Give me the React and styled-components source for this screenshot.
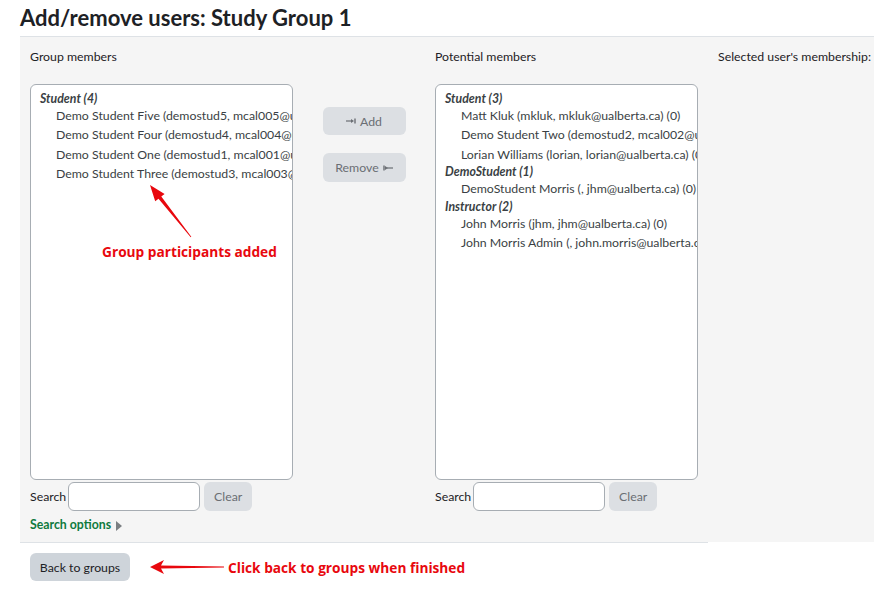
import React from "react"
import styled, { createGlobalStyle } from "styled-components"

const GlobalStyle = createGlobalStyle`
  body {
    margin: 0;
    background: #fff;
    font-family: Lato, "Liberation Sans", sans-serif;
    color: #1d2125;
  }
`

const Page = styled.div`
  padding-left: 20px;
  overflow: hidden;
`

const Title = styled.h2`
  margin: 6px 0 6px 0;
  font-size: 22px;
  line-height: 24px;
  font-weight: 700;
  color: #1d2125;
`

const Panel = styled.div`
  background: #f5f5f5;
  border-top: 1px solid #dee2e6;
  padding: 10px 0 0 10px;
`

const Columns = styled.div`
  display: grid;
  grid-template-columns: 263px 142px 263px 1fr;
`

const Column = styled.div`
  display: flex;
  flex-direction: column;
  padding-left: ${(p) => (p.$aside ? "20px" : "0")};
`

const Label = styled.div`
  font-size: 12.3px;
  line-height: 20px;
  white-space: nowrap;
`

const ListBox = styled.div`
  position: relative;
  box-sizing: border-box;
  margin-top: 17px;
  height: 396px;
  background: #fff;
  border: 1px solid #a7adb3;
  border-radius: 6px;
  padding: 6px 0 0 9px;
  overflow: hidden;
  font-size: 12.3px;
`

const GroupLabel = styled.div`
  font-weight: 700;
  font-style: italic;
  line-height: 15px;
  color: #3a3f44;
  white-space: nowrap;
`

const Option = styled.div`
  padding-left: 16px;
  line-height: 19.4px;
  color: #3a3f44;
  white-space: nowrap;
`

const Buttons = styled.div`
  display: flex;
  flex-direction: column;
  align-items: center;
  gap: 18px;
  padding-top: 60px;
`

const Button = styled.button`
  display: inline-flex;
  align-items: center;
  justify-content: center;
  gap: 4px;
  height: ${(p) => p.$h || 29}px;
  width: ${(p) => (p.$w ? p.$w + "px" : "auto")};
  padding: 0;
  border: none;
  border-radius: 6px;
  font-family: inherit;
  font-size: 12.3px;
  white-space: nowrap;
  background: ${(p) => (p.$disabled ? "#dcdfe3" : "#ced4da")};
  color: ${(p) => (p.$disabled ? "#6a6e73" : "#1d2125")};
  cursor: default;
`

const SearchRow = styled.div`
  display: flex;
  align-items: center;
  gap: 4px;
  margin-top: 2px;
  font-size: 12.3px;
`

const SearchLabel = styled.span`
  margin-right: -2px;
`

const SearchInput = styled.input`
  box-sizing: border-box;
  width: 132px;
  height: 29px;
  border: 1px solid #a7adb3;
  border-radius: 6px;
  background: #fff;
  margin: 0;
`

const SearchOptions = styled.div`
  display: flex;
  align-items: center;
  gap: 5px;
  margin-top: 4px;
  padding-bottom: 7px;
  font-size: 12.3px;
  line-height: 20px;
  font-weight: 700;
  color: #0f7a3e;
`

const Caret = styled.span`
  width: 0;
  height: 0;
  border-top: 5px solid transparent;
  border-bottom: 5px solid transparent;
  border-left: 6px solid #7b7f83;
  margin-top: 2px;
`

const Divider = styled.div`
  width: 688px;
  border-top: 1px solid #dee2e6;
`

const Footer = styled.div`
  display: flex;
  align-items: center;
  padding: 10px 0 0 10px;
`

const Note = styled.span`
  font-family: "Open Sans", "Noto Sans", sans-serif;
  font-weight: 700;
  font-size: 13.7px;
  color: #e8080e;
  white-space: nowrap;
`

const FooterNote = styled.div`
  display: flex;
  align-items: center;
  gap: 4px;
  margin-left: 20px;
`

const Callout = styled.div`
  position: absolute;
  left: 71px;
  top: 157px;
`

const CalloutArrow = styled.svg`
  position: absolute;
  left: 115px;
  top: 97px;
`

const AddIcon = () => (
  <svg width="10" height="6" viewBox="0 0 10 6">
    <path d="M0 3h6" stroke="#6a6e73" strokeWidth="1.2" />
    <path d="M5 1l3 2-3 2z" fill="#6a6e73" />
    <path d="M9 0.5v5" stroke="#6a6e73" strokeWidth="1.4" />
  </svg>
)

const RemoveIcon = () => (
  <svg width="10" height="6" viewBox="0 0 10 6">
    <path d="M1 0.5v5" stroke="#6a6e73" strokeWidth="1.4" />
    <path d="M2 1l3 2-3 2z" fill="#6a6e73" />
    <path d="M4 3h6" stroke="#6a6e73" strokeWidth="1.2" />
  </svg>
)

const members = [
  "Demo Student Five (demostud5, mcal005@ualberta.ca) (0)",
  "Demo Student Four (demostud4, mcal004@ualberta.ca) (0)",
  "Demo Student One (demostud1, mcal001@ualberta.ca) (0)",
  "Demo Student Three (demostud3, mcal003@ualberta.ca) (0)",
]

const potential = [
  {
    label: "Student (3)",
    users: [
      "Matt Kluk (mkluk, mkluk@ualberta.ca) (0)",
      "Demo Student Two (demostud2, mcal002@ualberta.ca) (0)",
      "Lorian Williams (lorian, lorian@ualberta.ca) (0)",
    ],
  },
  { label: "DemoStudent (1)", users: ["DemoStudent Morris (, jhm@ualberta.ca) (0)"] },
  {
    label: "Instructor (2)",
    users: [
      "John Morris (jhm, jhm@ualberta.ca) (0)",
      "John Morris Admin (, john.morris@ualberta.ca) (0)",
    ],
  },
]

const Search = () => (
  <SearchRow>
    <SearchLabel>Search</SearchLabel>
    <SearchInput />
    <Button $disabled $w={48}>Clear</Button>
  </SearchRow>
)

export default function App() {
  return (
    <Page>
      <GlobalStyle />
      <Title>Add/remove users: Study Group 1</Title>
      <Panel>
        <Columns>
          <Column>
            <Label>Group members</Label>
            <ListBox>
              <GroupLabel>Student (4)</GroupLabel>
              {members.map((m) => (
                <Option key={m}>{m}</Option>
              ))}
              <CalloutArrow width="50" height="60" viewBox="0 0 50 60">
                <path
                  d="M4 3 L18.6 11.9 L15.3 14.5 L45.3 54.8 L44.7 55.2 L12.5 16.7 L9.2 19.3 Z"
                  fill="#e8080e"
                />
              </CalloutArrow>
              <Callout>
                <Note>Group participants added</Note>
              </Callout>
            </ListBox>
            <Search />
            <SearchOptions>
              Search options <Caret />
            </SearchOptions>
          </Column>
          <Buttons>
            <Button $disabled $w={83} $h={28}>
              <AddIcon /> Add
            </Button>
            <Button $disabled $w={83}>
              Remove <RemoveIcon />
            </Button>
          </Buttons>
          <Column>
            <Label>Potential members</Label>
            <ListBox>
              {potential.map((g) => (
                <React.Fragment key={g.label}>
                  <GroupLabel>{g.label}</GroupLabel>
                  {g.users.map((u) => (
                    <Option key={u}>{u}</Option>
                  ))}
                </React.Fragment>
              ))}
            </ListBox>
            <Search />
          </Column>
          <Column $aside>
            <Label>Selected user's membership:</Label>
          </Column>
        </Columns>
      </Panel>
      <Divider />
      <Footer>
        <Button $w={100} $h={28}>Back to groups</Button>
        <FooterNote>
          <svg width="74" height="14" viewBox="0 0 74 14">
            <path d="M0 7 L14 0 L11 5.5 L74 6.5 L74 7.5 L11 8.5 L14 14 Z" fill="#e8080e" />
          </svg>
          <Note>Click back to groups when finished</Note>
        </FooterNote>
      </Footer>
    </Page>
  )
}
